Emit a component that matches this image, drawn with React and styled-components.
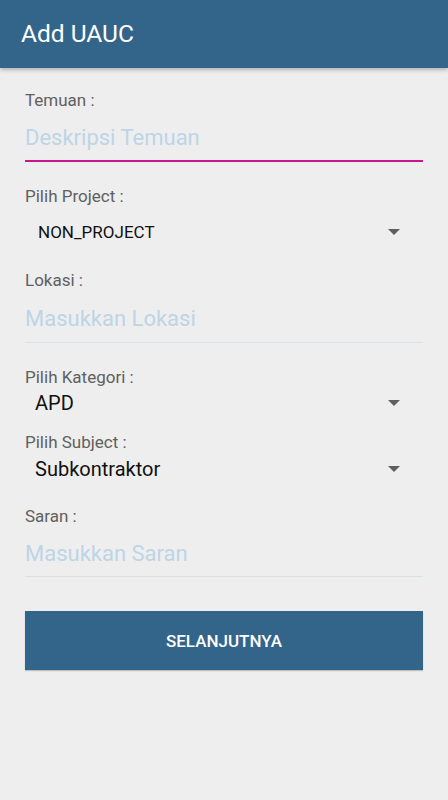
import React from 'react';
import styled, { createGlobalStyle } from 'styled-components';

const Global = createGlobalStyle`
  html, body {
    margin: 0;
    padding: 0;
    background: #eeeeee;
    font-family: Roboto, "Noto Sans", sans-serif;
  }
`

const Screen = styled.div`
  width: 448px;
  min-height: 800px;
  background: #eeeeee;
  display: flex;
  flex-direction: column;
`

const AppBar = styled.header`
  height: 68px;
  background-color: #33658a;
  display: flex;
  align-items: center;
  padding-left: 21px;
  box-shadow: 0 2px 4px rgba(0,0,0,0.25);
  position: relative;
  z-index: 1;
`

const Title = styled.h1`
  margin: 0;
  color: #ffffff;
  font-size: 24.5px;
  font-weight: 400;
  padding-bottom: 1px;
`

const Form = styled.form`
  display: flex;
  flex-direction: column;
  padding: 0 25px;
`

const Label = styled.div`
  color: #606060;
  font-size: 17px;
  line-height: 20px;
  margin-top: ${props => props.$top}px;
`

const Input = styled.input`
  background: transparent;
  border: none;
  outline: none;
  font-family: inherit;
  font-size: 22px;
  padding: 4px 0 0 0;
  height: ${props => props.$h}px;
  margin: 0;
  color: #333;
  border-bottom: ${props => props.$focused ? '2px solid #c9168b' : '1px solid #d6e1e8'};
  box-sizing: content-box;

  &::placeholder {
    color: #bdd5e6;
  }
`

const Select = styled.div`
  display: flex;
  align-items: center;
  height: ${props => props.$h}px;
  padding-right: 23px;
  color: #111111;
  font-size: ${props => props.$size}px;
`

const Value = styled.span`
  flex: 1;
  line-height: 1;
  padding-left: ${props => props.$indent}px;
`

const Arrow = styled.span`
  width: 0;
  height: 0;
  border-left: 6px solid transparent;
  border-right: 6px solid transparent;
  border-top: 6px solid #5f5f5f;
`

const Button = styled.button`
  margin-top: 34px;
  height: 59px;
  border: none;
  background-color: #33658a;
  color: #ffffff;
  font-family: inherit;
  font-size: 17px;
  font-weight: 500;
  box-shadow: 0 1px 1px rgba(0,0,0,0.2);
`

const App = () => {
  return (
    <Screen>
      <Global />
      <AppBar>
        <Title>Add UAUC</Title>
      </AppBar>
      <Form onSubmit={e => e.preventDefault()}>
        <Label $top={22}>Temuan :</Label>
        <Input $focused $h={46} placeholder="Deskripsi Temuan" />

        <Label $top={24}>Pilih Project :</Label>
        <Select $h={52} $size={17}>
          <Value $indent={13}>NON_PROJECT</Value>
          <Arrow />
        </Select>

        <Label $top={12}>Lokasi :</Label>
        <Input $h={48} placeholder="Masukkan Lokasi" />

        <Label $top={24}>Pilih Kategori :</Label>
        <Select $h={32} $size={20}>
          <Value $indent={10}>APD</Value>
          <Arrow />
        </Select>

        <Label $top={13}>Pilih Subject :</Label>
        <Select $h={34} $size={20}>
          <Value $indent={10}>Subkontraktor</Value>
          <Arrow />
        </Select>

        <Label $top={20}>Saran :</Label>
        <Input $h={46} placeholder="Masukkan Saran" />

        <Button type="submit">SELANJUTNYA</Button>
      </Form>
    </Screen>
  );
}

export default App;
